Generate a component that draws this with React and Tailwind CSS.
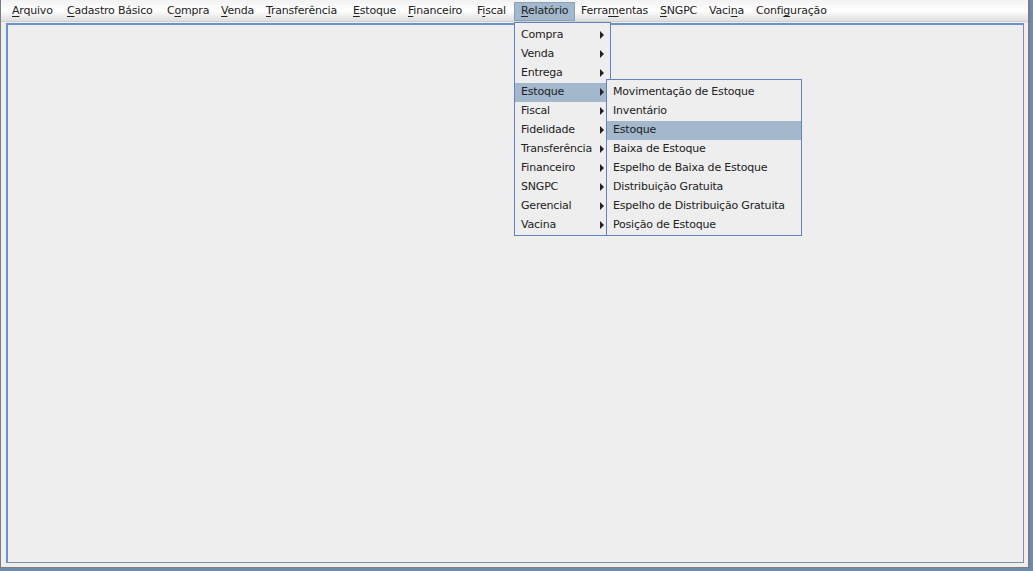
const menus = [
  { label: "Arquivo", key: 0, w: "w-[55px]" },
  { label: "Cadastro Básico", key: 0, w: "w-[100px]" },
  { label: "Compra", key: 1, w: "w-[54px]" },
  { label: "Venda", key: 0, w: "w-[45px]" },
  { label: "Transferência", key: 0, w: "w-[87px]" },
  { label: "Estoque", key: 0, w: "w-[55px]" },
  { label: "Financeiro", key: 0, w: "w-[69px]" },
  { label: "Fiscal", key: 1, w: "w-[43px]" },
  { label: "Relatório", key: 0, w: "w-[61px]", active: true },
  { label: "Ferramentas", key: 5, w: "w-[79px]" },
  { label: "SNGPC", key: 0, w: "w-[49px]" },
  { label: "Vacina", key: 4, w: "w-[47px]" },
  { label: "Configuração", key: 5, w: "w-[85px]" },
];

const relatorio = [
  "Compra",
  "Venda",
  "Entrega",
  "Estoque",
  "Fiscal",
  "Fidelidade",
  "Transferência",
  "Financeiro",
  "SNGPC",
  "Gerencial",
  "Vacina",
];

const estoque = [
  "Movimentação de Estoque",
  "Inventário",
  "Estoque",
  "Baixa de Estoque",
  "Espelho de Baixa de Estoque",
  "Distribuição Gratuita",
  "Espelho de Distribuição Gratuita",
  "Posição de Estoque",
];

const Mnemonic = ({ text, idx }) => (
  <span>
    {text.slice(0, idx)}
    <span className="underline underline-offset-2">{text[idx]}</span>
    {text.slice(idx + 1)}
  </span>
);

const Arrow = () => (
  <svg width="4" height="8" viewBox="0 0 4 8" className="shrink-0 -mt-[2px]">
    <path d="M0 0 L4 4 L0 8 Z" fill="#222" />
  </svg>
);

export default function App() {
  return (
    <div
      className="relative w-[1033px] h-[571px] bg-[#6a8cae] text-[11px] tracking-[-0.2px] text-[#222] overflow-hidden"
      style={{ fontFamily: '"DejaVu Sans", Verdana, sans-serif' }}
    >
      <div className="w-[1030px] h-[568px] bg-[#eeeeee] border-l border-r-2 border-b border-[#7d7d7d] flex flex-col">
        {/* menu bar */}
        <div className="h-[22px] shrink-0 flex items-end pl-[5px] bg-gradient-to-b from-[#f2f2f2] via-white to-[#dedede] border-b border-[#d0d0d0]">
          {menus.map((m) => (
            <div
              key={m.label}
              className={`${m.w} h-[19px] shrink-0 flex items-center pl-[6px] whitespace-nowrap ${
                m.active ? "bg-[#a3b8cc] border border-[#8aa0b8] pl-[5px]" : ""
              }`}
            >
              <Mnemonic text={m.label} idx={m.key} />
            </div>
          ))}
        </div>

        {/* desktop */}
        <div className="flex-1 flex pl-[5px] pr-[4px] pt-[1px] pb-[4px]">
          <div className="flex-1 border border-t-2 border-l-2 border-t-[#6e8fd0] border-l-[#6e8fd0] border-r-[#7f8ea5] border-b-[#7f8ea5]" />
        </div>
      </div>

      {/* Relatório popup */}
      <div className="absolute left-[514px] top-[22px] w-[97px] bg-[#eeeeee] border border-[#6382bf] pt-[3px]">
        {relatorio.map((r) => (
          <div
            key={r}
            className={`h-[19px] flex items-center justify-between pl-[6px] pr-[6px] whitespace-nowrap ${
              r === "Estoque" ? "bg-[#a3b8cc]" : ""
            }`}
          >
            <span>{r}</span>
            <Arrow />
          </div>
        ))}
      </div>

      {/* Estoque submenu */}
      <div className="absolute left-[606px] top-[79px] w-[196px] bg-[#eeeeee] border border-[#6382bf] pt-[3px]">
        {estoque.map((r, i) => (
          <div
            key={r}
            className={`h-[19px] flex items-center pl-[6px] whitespace-nowrap ${
              i === 2 ? "bg-[#a3b8cc]" : ""
            }`}
          >
            {r}
          </div>
        ))}
      </div>
    </div>
  );
}
